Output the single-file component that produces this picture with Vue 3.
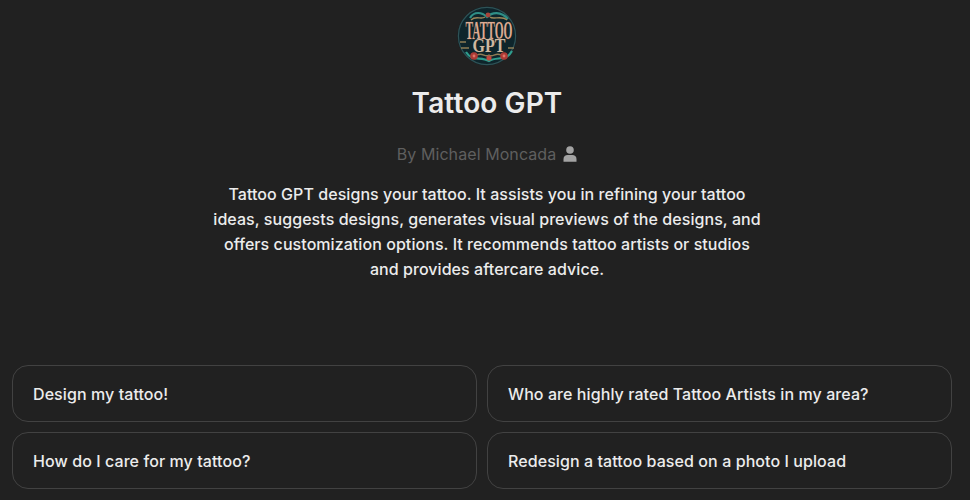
<script setup>
const prompts = [
  'Design my tattoo!',
  'Who are highly rated Tattoo Artists in my area?',
  'How do I care for my tattoo?',
  'Redesign a tattoo based on a photo I upload'
]
</script>

<template>
  <main class="page">
    <section class="hero">
      <svg class="logo" width="60" height="60" viewBox="0 0 60 60" aria-label="Tattoo GPT logo">
        <circle cx="30" cy="30" r="29.5" fill="#0e252b" />
        <circle cx="30" cy="30" r="28.6" fill="none" stroke="#2f5256" stroke-width="1.2" />
        <path d="M13 12C17 5 25 6 30 11C35 6 44 5 51 13" fill="none" stroke="#2f8f86" stroke-width="2.2" />
        <path d="M14 14C19 9 24 14 28 11M50 14C45 9 36 14 33 11" fill="none" stroke="#9c8759" stroke-width="1.4" />
        <circle cx="31" cy="9" r="2.4" fill="#a8453b" />
        <text class="lt one" text-anchor="middle" transform="translate(32 33) scale(1 2.2)">TATTOO</text>
        <text class="lt two" text-anchor="middle" transform="translate(32 46) scale(1 1.2)">GPT</text>
        <path d="M3 36H9M4 42H12M51 42H57" stroke="#8f7d55" stroke-width="1.4" />
        <path d="M9 46C15 56 24 50 32 55C40 50 49 56 55 45" fill="none" stroke="#2f9d8d" stroke-width="2.2" />
        <path d="M20 49C26 46 28 52 32 49C36 52 38 46 44 49" fill="none" stroke="#8f7d55" stroke-width="1.3" />
        <circle cx="17" cy="50" r="3.8" fill="#ad3a35" />
        <circle cx="47" cy="50" r="3.8" fill="#ad3a35" />
        <circle cx="32" cy="52" r="2.6" fill="#c0473d" />
        <circle cx="17" cy="50" r="1.4" fill="#dd7668" />
        <circle cx="47" cy="50" r="1.4" fill="#dd7668" />
      </svg>
      <h1 class="title">Tattoo GPT</h1>
      <div class="author">
        <span>By Michael Moncada</span>
        <svg class="person" width="14" height="16" viewBox="0 0 14 16" aria-hidden="true">
          <circle cx="7" cy="4" r="3.8" />
          <path d="M0.5 15.8V13C0.5 10.6 2.4 9 4.6 9H9.4C11.6 9 13.5 10.6 13.5 13V15.8Z" />
        </svg>
      </div>
      <p class="desc">Tattoo GPT designs your tattoo. It assists you in refining your tattoo ideas, suggests designs, generates visual previews of the designs, and offers customization options. It recommends tattoo artists or studios and provides aftercare advice.</p>
    </section>
    <section class="grid">
      <button v-for="p in prompts" :key="p" class="card">{{ p }}</button>
    </section>
  </main>
</template>

<style>
html, body { margin: 0; background: #212121; }
</style>

<style scoped>
.page {
  width: 970px;
  height: 500px;
  overflow: hidden;
  background: #212121;
  font-family: Inter, "Liberation Sans", sans-serif;
  display: flex;
  flex-direction: column;
}
.hero {
  display: flex;
  flex-direction: column;
  align-items: center;
  padding: 6px 0 0 4px;
  height: 359px;
  box-sizing: border-box;
}
.logo { display: block; }
.lt {
  font-family: "Liberation Serif", serif;
  font-weight: 700;
  stroke: #34302a;
  stroke-width: 0.4px;
  paint-order: stroke;
}
.one { font-size: 11.4px; fill: #dcab93; }
.two { font-size: 16px; fill: #cdb8a0; }
.title {
  margin: 18px 0 0;
  padding-top: 1px;
  font-size: 28px;
  line-height: 36px;
  font-weight: 600;
  color: #ececec;
  letter-spacing: 0.1px;
}
.author {
  margin-top: 21px;
  display: flex;
  align-items: center;
  gap: 7px;
  font-size: 16px;
  line-height: 24px;
  color: #5f5f5f;
  letter-spacing: 0.08px;
}
.person { fill: #a3a3a3; }
.desc {
  margin: 16px 0 0;
  width: 552px;
  text-align: center;
  font-size: 16px;
  line-height: 25px;
  font-weight: 450;
  color: #ececec;
  letter-spacing: 0.06px;
}
.grid {
  display: grid;
  grid-template-columns: 465px 465px;
  grid-auto-rows: 57px;
  column-gap: 10px;
  row-gap: 10px;
  padding: 6px 0 0 12px;
}
.card {
  background: transparent;
  border: 1px solid #424242;
  border-radius: 16px;
  padding: 0 20px;
  text-align: left;
  font: inherit;
  font-size: 16px;
  font-weight: 450;
  color: #ececec;
  letter-spacing: 0.08px;
}
</style>
